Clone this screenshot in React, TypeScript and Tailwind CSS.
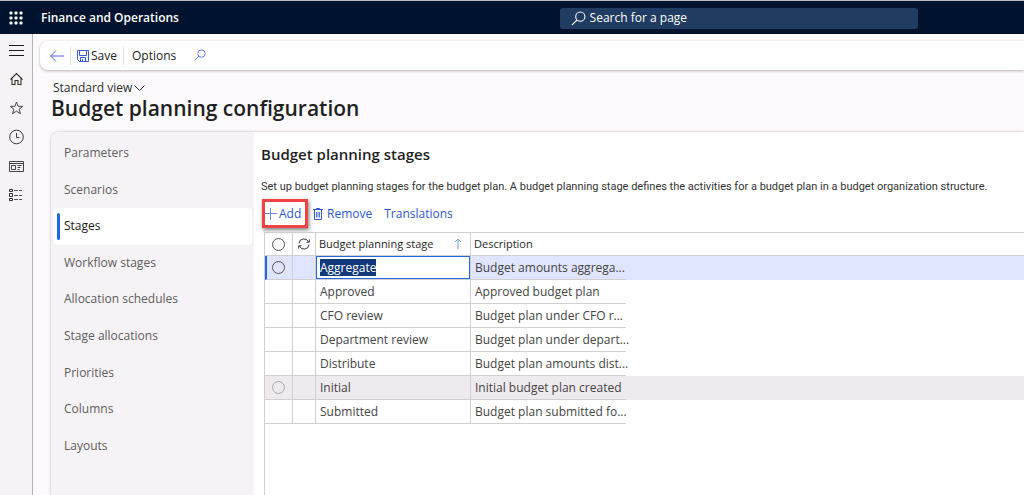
import { useEffect, useRef, useState } from "react";
import type { ReactNode } from "react";

type IconProps = { className: string; box: string; children: ReactNode };

function Icon({ className, box, children }: IconProps) {
  return (
    <svg
      viewBox={box}
      className={className}
      fill="none"
      stroke="currentColor"
      strokeWidth="1"
      aria-hidden="true"
    >
      {children}
    </svg>
  );
}

const SearchIcon = ({ className }: { className: string }) => (
  <Icon className={className} box="0 0 14 14">
    <circle cx="8.7" cy="5.3" r="4.3" />
    <path d="M5.6 8.4 0.8 13.2" />
  </Icon>
);

const railItems = [
  {
    label: "Expand the navigation pane",
    art: <path d="M0 3.5h15M0 8.5h15M0 13.5h15" stroke="#1c1c1c" />,
  },
  {
    label: "Home",
    art: (
      <path
        d="M1.5 8.5 7.5 2.5 13.5 8.5M3 7.5V13.5H6V9.5H9V13.5H12V7.5"
        stroke="#3a3028"
        strokeWidth="1.1"
      />
    ),
  },
  {
    label: "Favorites",
    art: (
      <path
        d="M7.5 2 9.1 6.3 13.7 6.4 10.1 9.2 11.4 13.7 7.5 11.1 3.6 13.7 4.9 9.2 1.3 6.4 5.9 6.3Z"
        stroke="#444"
      />
    ),
  },
  {
    label: "Recent",
    art: (
      <>
        <circle cx="7.5" cy="8" r="6.8" stroke="#3c3c3c" />
        <path d="M7.5 4V8.5H10.5" stroke="#3c3c3c" />
      </>
    ),
  },
  {
    label: "Workspaces",
    art: (
      <>
        <path d="M0.5 3.5h14v10h-14ZM0.5 5.5h14" stroke="#444" />
        <path d="M2.5 7.5h4v4h-4ZM8.5 7.5h4M8.5 9.5h3M8.5 11.5h2" stroke="#444" />
      </>
    ),
  },
  {
    label: "Modules",
    art: (
      <>
        <path d="M0.5 2.5h3v2h-3ZM0.5 6.5h3v3h-3ZM0.5 11.5h3v2h-3Z" stroke="#333" />
        <path d="M5 3.5h4M10 3.5h3M5 8.5h4M10 8.5h3M5 12.5h4M10 12.5h3" stroke="#555" />
      </>
    ),
  },
];

const sections = [
  "Parameters",
  "Scenarios",
  "Stages",
  "Workflow stages",
  "Allocation schedules",
  "Stage allocations",
  "Priorities",
  "Columns",
  "Layouts",
];

const stages = [
  { name: "Aggregate", description: "Budget amounts aggrega..." },
  { name: "Approved", description: "Approved budget plan" },
  { name: "CFO review", description: "Budget plan under CFO r..." },
  { name: "Department review", description: "Budget plan under depart..." },
  { name: "Distribute", description: "Budget plan amounts dist..." },
  { name: "Initial", description: "Initial budget plan created" },
  { name: "Submitted", description: "Budget plan submitted fo..." },
];

function TopBar() {
  return (
    <header className="flex h-[34px] shrink-0 items-center border-t border-[#b9bdb9] bg-[#00132e] pt-px text-white">
      <button type="button" aria-label="App launcher" className="ml-2 flex size-4 items-center justify-center">
        <svg viewBox="0 0 14 14" className="size-[14px]" fill="#fff" aria-hidden="true">
          {[0, 5, 10].map((y) =>
            [0, 5, 10].map((x) => <rect key={`${x}-${y}`} x={x + 0.5} y={y + 0.5} width="3" height="3" rx="1" />),
          )}
        </svg>
      </button>
      <span className="ml-[17px] text-[12px] leading-[20px] font-semibold">Finance and Operations</span>
      <label className="mr-[106px] ml-auto flex h-[21px] w-[35%] items-center gap-1 rounded-[3px] bg-[#213c62] pl-[11px]">
        <SearchIcon className="size-[15px] shrink-0" />
        <input
          type="text"
          aria-label="Search for a page"
          placeholder="Search for a page"
          className="min-w-0 flex-1 bg-transparent text-[12px] outline-none placeholder:text-white"
        />
      </label>
    </header>
  );
}

function Rail() {
  return (
    <nav aria-label="Main" className="flex w-[33px] shrink-0 flex-col items-center border-r border-[#b5b1b4] bg-[#f6f3f6] pt-px">
      {railItems.map((item) => (
        <button key={item.label} type="button" aria-label={item.label} className="flex h-[29px] w-full items-center justify-center">
          <Icon className="h-4 w-[15px]" box="0 0 15 16">
            {item.art}
          </Icon>
        </button>
      ))}
    </nav>
  );
}

function CommandBar() {
  return (
    <div className="ml-[7px] flex h-[29px] items-center rounded-l-[8px] bg-white pl-[10px] shadow-[0_1px_3px_rgba(60,40,50,0.35)]">
      <button type="button" aria-label="Back" className="text-[#4a66e0]">
        <Icon className="h-3 w-[14px]" box="0 0 14 12">
          <path d="M0.7 6H14M6 0.5 0.7 6 6 11.5" />
        </Icon>
      </button>
      <span className="ml-[6px] h-[18px] w-px bg-[#dedcde]" />
      <button type="button" className="ml-[6px] flex items-center gap-[2px] text-[12px] text-[#222]">
        <Icon className="size-3 text-[#3b5bdb]" box="0 0 12 12">
          <path d="M0.5 0.5h11v11h-9l-2-2ZM2.5 0.5v5h7v-5M3.5 11.5v-4h5v4M5.5 9v2.5" />
        </Icon>
        Save
      </button>
      <span className="ml-[6px] h-[18px] w-px bg-[#dedcde]" />
      <button type="button" className="ml-2 text-[12px] font-medium text-[#1b1b1b]">
        Options
      </button>
      <button type="button" aria-label="Search actions" className="ml-[18px] pb-[2px] text-[#4a6ae0]">
        <SearchIcon className="size-3" />
      </button>
    </div>
  );
}

function SectionTabs() {
  return (
    <nav aria-label="Sections" className="w-[203px] shrink-0 rounded-tl-[8px] bg-[#f6f3f6] pt-[3px]">
      <ul className="grid h-[329px] auto-rows-fr px-[2px]">
        {sections.map((label) => {
          const active = label === "Stages";
          return (
            <li key={label} className="flex">
              <a
                href="#"
                aria-current={active ? "page" : undefined}
                className={
                  active
                    ? "flex flex-1 items-center gap-1 rounded-[4px] bg-white pl-1 text-[12px] text-[#1b1b1b]"
                    : "flex flex-1 items-center pl-[11px] text-[12px] text-[#5e5c5e]"
                }
              >
                {active && <span className="h-[27px] w-[3px] rounded-[2px] bg-[#2266e3]" />}
                {label}
              </a>
            </li>
          );
        })}
      </ul>
    </nav>
  );
}

function StageTable() {
  const [name, setName] = useState("Aggregate");
  const field = useRef<HTMLInputElement>(null);

  useEffect(() => {
    field.current?.focus();
    field.current?.select();
  }, []);

  return (
    <div className="ml-[10px] flex-1 border-t border-l border-[#d0d0d0]">
      <table className="w-full table-fixed border-separate border-spacing-0 text-left text-[12px]">
        <colgroup>
          <col className="w-[28px]" />
          <col className="w-[23px]" />
          <col className="w-[155px]" />
          <col className="w-[155px]" />
          <col />
        </colgroup>
        <thead>
          <tr className="h-[23px] text-[11px] text-[#1f1f1f]">
            <th className="border-r border-b border-[#d0d0d0] p-0">
              <input
                type="checkbox"
                aria-label="Select all rows"
                className="mx-auto block size-[13px] appearance-none rounded-full border border-[#555]"
              />
            </th>
            <th className="border-r border-b border-[#d0d0d0] p-0">
              <button type="button" aria-label="Refresh" className="mx-auto block text-[#333]">
                <Icon className="h-3 w-3" box="0 0 12 12">
                  <path d="M1 5.2A5 5 0 0 1 10.5 3.8M11.3 1.4V4.2H8.5M11 6.8A5 5 0 0 1 1.5 8.2M0.7 10.6V7.8H3.5" />
                </Icon>
              </button>
            </th>
            <th className="border-r border-b border-[#d0d0d0] p-0 pr-2 pl-[3px] font-normal">
              <span className="flex items-center justify-between">
                Budget planning stage
                <Icon className="h-3 w-2 text-[#6ea3dd]" box="0 0 8 12">
                  <path d="M4 11.5V1M1 4 4 1 7 4" />
                </Icon>
              </span>
            </th>
            <th className="border-b border-[#d0d0d0] p-0 pl-[3px] font-normal">Description</th>
            <td className="border-b border-[#d0d0d0] p-0" />
          </tr>
        </thead>
        <tbody className="text-[#444]">
          {stages.map((stage, index) => {
            const selected = index === 0;
            const hovered = stage.name === "Initial";
            return (
              <tr
                key={stage.name}
                className={selected ? "h-[24px] bg-[#dfe5ff]" : hovered ? "h-[24px] bg-[#eeeaed]" : "h-[24px]"}
              >
                <td
                  className={
                    selected
                      ? "border-r border-b border-l-2 border-[#d0d0d0] border-l-[#2266e3] p-0 pr-[2px]"
                      : "border-r border-b border-[#d0d0d0] p-0"
                  }
                >
                  {(selected || hovered) && (
                    <input
                      type="radio"
                      name="stage"
                      aria-label={`Select ${stage.name}`}
                      className={
                        selected
                          ? "mx-auto block size-[13px] appearance-none rounded-full border border-[#555]"
                          : "mx-auto block size-[13px] appearance-none rounded-full border border-[#aaa]"
                      }
                    />
                  )}
                </td>
                <td className="border-r border-b border-[#d0d0d0] p-0" />
                <td className="border-r border-b border-[#d0d0d0] p-0">
                  {selected ? (
                    <input
                      ref={field}
                      type="text"
                      aria-label="Budget planning stage"
                      value={name}
                      onChange={(e) => setName(e.target.value)}
                      className="block h-[23px] w-full bg-white pl-1 leading-[17px] text-[#1f1f1f] outline-1 -outline-offset-1 outline-[#2266e3] outline-solid selection:bg-[#12397c] selection:text-white"
                    />
                  ) : (
                    <span className="block pl-1">{stage.name}</span>
                  )}
                </td>
                <td className="border-b border-[#d0d0d0] p-0 pl-1 whitespace-nowrap">{stage.description}</td>
                <td className="p-0" />
              </tr>
            );
          })}
        </tbody>
      </table>
    </div>
  );
}

function StagesPane() {
  return (
    <section className="flex min-w-0 flex-1 flex-col bg-white">
      <h2 className="mt-[11px] ml-[7px] text-[15px] leading-[22px] font-semibold text-[#1f1f1f]">Budget planning stages</h2>
      <p className="mt-3 ml-[7px] font-['Roboto','Open_Sans',sans-serif] text-[11px] leading-[20px] text-[#333]">
        Set up budget planning stages for the budget plan. A budget planning stage defines the activities for a budget plan in a
        budget organization structure.
      </p>
      <div className="flex h-[35px] items-start pt-[2px] pl-[8px] text-[12px] text-[#2b56d6]">
        <button
          type="button"
          className="flex h-[29px] w-[46px] items-center gap-[2px] border-3 border-[#f04444] shadow-[1px_2px_4px_rgba(0,0,0,0.5)]"
        >
          <Icon className="size-3 shrink-0 text-[#6f8ae6]" box="0 0 12 12">
            <path d="M0 5.5h12M5.5 0v12" />
          </Icon>
          Add
        </button>
        <button type="button" className="ml-[5px] flex h-[29px] items-center gap-[4px]">
          <Icon className="h-3 w-[10px]" box="0 0 10 12">
            <path d="M0 1.5h10M3.5 1.5v-1h3v1M1.5 1.5v10h7v-10" />
            <path d="M3.5 4v5.5M5 4v5.5M6.5 4v5.5" strokeWidth="0.8" />
          </Icon>
          Remove
        </button>
        <button type="button" className="ml-3 h-[29px]">
          Translations
        </button>
      </div>
      <StageTable />
    </section>
  );
}

export default function App() {
  return (
    <div className="flex min-h-screen flex-col bg-[#fdfafd] font-['Open_Sans','Noto_Sans',sans-serif]">
      <TopBar />
      <div className="flex flex-1">
        <Rail />
        <main className="flex min-w-0 flex-1 flex-col overflow-hidden pt-[7px]">
          <CommandBar />
          <div className="pt-[10px] pl-[18px]">
            <button type="button" className="flex items-center gap-[2px] pl-[2px] text-[12px] leading-[16px] text-[#2b2b2b]">
              Standard view
              <Icon className="h-[6px] w-[11px]" box="0 0 11 6">
                <path d="M0.5 0.5 5.5 5.5 10.5 0.5" />
              </Icon>
            </button>
            <h1 className="text-[21px] leading-[24px] font-semibold text-[#1f1f1f]">Budget planning configuration</h1>
          </div>
          <div className="mt-3 ml-[18px] flex flex-1 rounded-tl-[8px] shadow-[0_0_3px_rgba(90,50,60,0.35)]">
            <SectionTabs />
            <StagesPane />
          </div>
        </main>
      </div>
    </div>
  );
}
